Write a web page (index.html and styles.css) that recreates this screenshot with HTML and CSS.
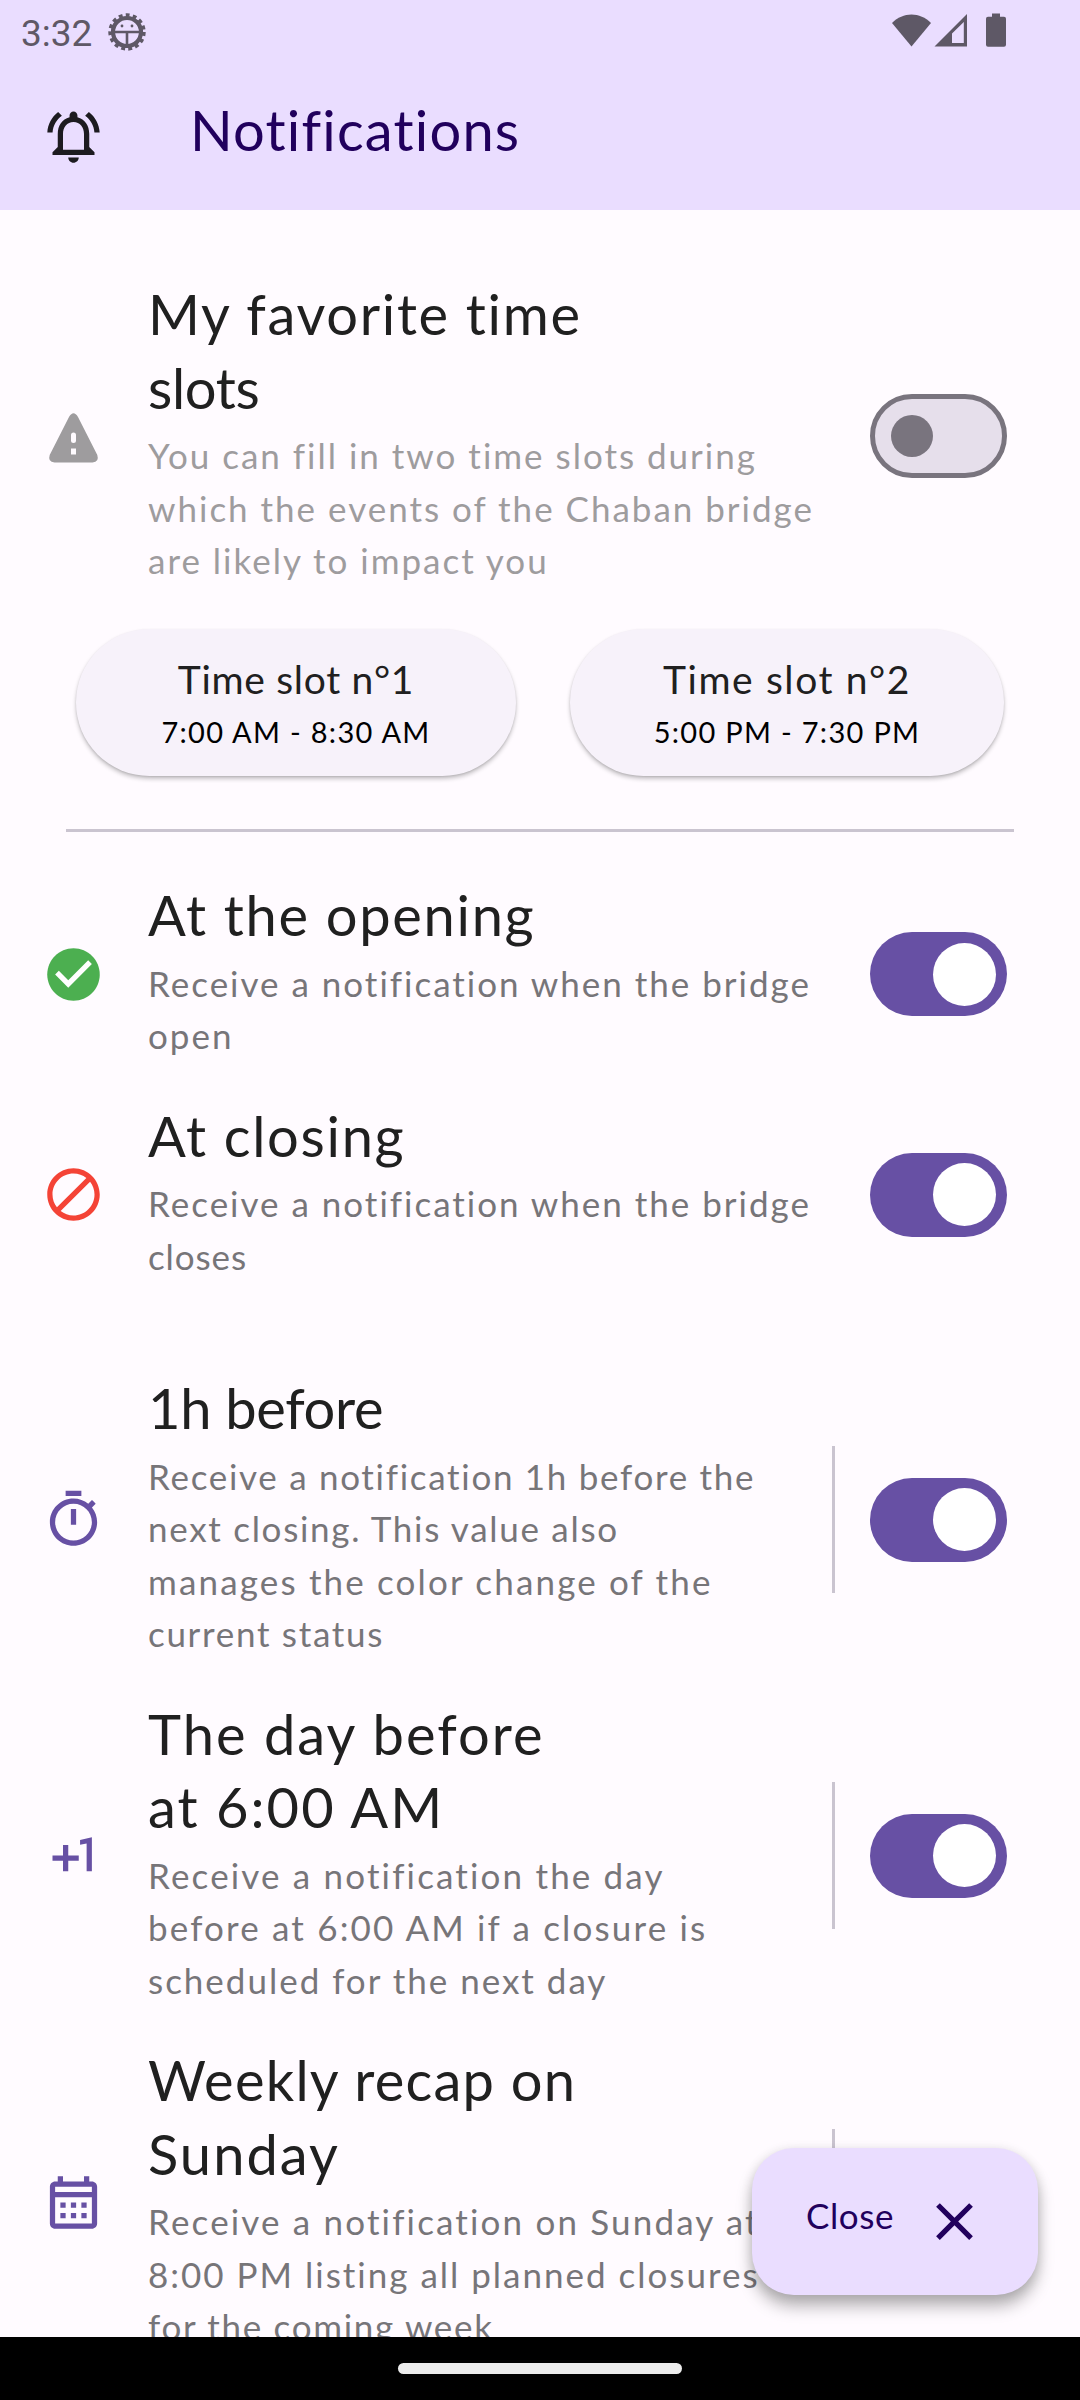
FILE: index.html
```html
<!DOCTYPE html>
<html lang="en">
<head>
<meta charset="utf-8">
<title>Notifications</title>
<link rel="stylesheet" href="styles.css">
</head>
<body>
<div class="screen">
  <header class="header">
    <div class="status">
      <span class="clock">3:32</span>
      <svg class="debug" viewBox="0 0 38 38" fill="none">
        <circle cx="19" cy="19" r="17" stroke="#5e5866" stroke-width="3.4" stroke-dasharray="3.9 3.220"/>
        <circle cx="19" cy="19" r="14" stroke="#5e5866" stroke-width="4.2"/>
        <path d="M5 19h28M19 19v14" stroke="#5e5866" stroke-width="2.6"/>
        <circle cx="14" cy="13" r="1.4" fill="#5e5866"/><circle cx="24" cy="13" r="1.4" fill="#5e5866"/>
      </svg>
      <svg class="signals" viewBox="0 0 116 36" fill="#5e5866">
        <path d="M0 10C11-1.500 28-1.500 39 10L19.500 33.500z"/>
        <path fill-rule="evenodd" d="M42.500 33.500 75 1v32.500zM60 30h11.800V9L60 20.500z"/>
        <path d="M100 .5h8v3.300h4a2 2 0 0 1 2 2v26a2 2 0 0 1-2 2H96a2 2 0 0 1-2-2v-26a2 2 0 0 1 2-2h4z"/>
      </svg>
    </div>
    <div class="appbar">
      <svg class="icon bell" viewBox="0 0 24 24"><path d="M12 22c1.100 0 2-.9 2-2h-4c0 1.100.9 2 2 2zm6-6v-5c0-3.070-1.630-5.640-4.500-6.320V4c0-.83-.67-1.500-1.500-1.500s-1.500.67-1.500 1.500v.68C7.640 5.360 6 7.920 6 11v5l-2 2v1h16v-1l-2-2zm-2 1H8v-6c0-2.480 1.510-4.500 4-4.500s4 2.020 4 4.500v6zM7.580 4.080L6.150 2.650C3.750 4.480 2.170 7.300 2.030 10.500h2c.15-2.650 1.510-4.970 3.550-6.420zm12.390 6.420h2c-.15-3.200-1.730-6.020-4.120-7.850l-1.420 1.430c2.020 1.450 3.390 3.770 3.540 6.420z"/></svg>
      <h1>Notifications</h1>
    </div>
  </header>

  <main class="content">
    <section class="row muted">
      <svg class="icon warning" viewBox="0 0 63 63"><path fill-rule="evenodd" d="M27 12Q31.500 4.500 36 12L55.300 50Q57.500 57 50.500 57.500H12.500Q5.500 57 7.700 50zM31.500 27.500a2.500 2.500 0 0 0-2.500 2.500v5.500a2.500 2.500 0 0 0 5 0V30a2.500 2.500 0 0 0-2.500-2.500zM29 43.500v6h5v-6z"/></svg>
      <div class="body">
        <h2>My favorite time<br><span class="snug">slots</span></h2>
        <p>You can fill in two time slots during<br>which the events of the Chaban bridge<br>are likely to impact you</p>
      </div>
      <span class="switch off"><i></i></span>
    </section>

    <div class="slots">
      <div class="slot first"><b>Time slot n°1</b><span>7:00 AM - 8:30 AM</span></div>
      <div class="slot second"><b>Time slot n°2</b><span>5:00 PM - 7:30 PM</span></div>
    </div>
    <hr>

    <section class="row">
      <svg class="icon green" viewBox="0 0 24 24"><path d="M12 2C6.480 2 2 6.480 2 12s4.480 10 10 10 10-4.480 10-10S17.520 2 12 2z"/><path fill="#fff" d="M10 17l-5-5 1.410-1.410L10 14.170l7.590-7.590L19 8l-9 9z"/></svg>
      <div class="body">
        <h2>At the opening</h2>
        <p>Receive a notification when the bridge<br>open</p>
      </div>
      <span class="switch"><i></i></span>
    </section>

    <section class="row closing">
      <svg class="icon red" viewBox="0 0 24 24"><path d="M12 2C6.480 2 2 6.480 2 12s4.480 10 10 10 10-4.480 10-10S17.520 2 12 2zM4 12c0-4.420 3.580-8 8-8 1.850 0 3.550.63 4.900 1.690L5.690 16.900C4.630 15.550 4 13.850 4 12zm8 8c-1.850 0-3.550-.63-4.900-1.690L18.310 7.100C19.370 8.450 20 10.150 20 12c0 4.420-3.580 8-8 8z"/></svg>
      <div class="body">
        <h2>At closing</h2>
        <p>Receive a notification when the bridge<br><span class="tight">closes</span></p>
      </div>
      <span class="switch"><i></i></span>
    </section>

    <section class="row">
      <svg class="icon" viewBox="0 0 24 24"><path d="M9 1h6v2H9zM19.030 7.390l1.420-1.420c-.43-.51-.9-.99-1.410-1.410l-1.420 1.420C16.070 4.740 14.120 4 12 4c-4.970 0-9 4.030-9 9s4.020 9 9 9 9-4.030 9-9c0-2.120-.74-4.070-1.970-5.610zM12 20c-3.870 0-7-3.130-7-7s3.130-7 7-7 7 3.130 7 7-3.130 7-7 7zM11 8h2v6h-2z"/></svg>
      <div class="body">
        <h2 class="snug">1h before</h2>
        <p><span class="medium">Receive a notification 1h before the</span><br><span class="medium">next closing. This value also</span><br><span class="wide">manages the color change of the</span><br><span class="medium">current status</span></p>
      </div>
      <span class="rule"></span>
      <span class="switch"><i></i></span>
    </section>

    <section class="row">
      <svg class="icon" viewBox="0 0 24 24"><path d="M10 8H8v4H4v2h4v4h2v-4h4v-2h-4zm4.500-1.920V7.900l2.500-.5V18h2V5z"/></svg>
      <div class="body">
        <h2><span class="loose">The day before</span><br><span class="loose">at 6:00 AM</span></h2>
        <p><span class="wide">Receive a notification the day</span><br><span class="wide">before at 6:00 AM if a closure is</span><br>scheduled for the next day</p>
      </div>
      <span class="rule"></span>
      <span class="switch"><i></i></span>
    </section>

    <section class="row">
      <svg class="icon" viewBox="0 0 24 24"><path d="M19 4h-1V2h-2v2H8V2H6v2H5c-1.110 0-1.990.9-1.990 2L3 20c0 1.100.89 2 2 2h14c1.100 0 2-.9 2-2V6c0-1.100-.9-2-2-2zm0 16H5V10h14v10zm0-12H5V6h14v2zM9 14H7v-2h2v2zm4 0h-2v-2h2v2zm4 0h-2v-2h2v2zm-8 4H7v-2h2v2zm4 0h-2v-2h2v2zm4 0h-2v-2h2v2z"/></svg>
      <div class="body">
        <h2><span class="near">Weekly recap on</span><br><span class="loose">Sunday</span></h2>
        <p><span class="wide">Receive a notification on Sunday at</span><br>8:00 PM listing all planned closures<br><span class="medium">for the coming week</span></p>
      </div>
      <span class="rule"></span>
      <span class="switch"><i></i></span>
    </section>
  </main>

  <div class="fab">
    <span>Close</span>
    <svg class="fab-icon" viewBox="0 0 24 24"><path d="M19 6.410L17.590 5 12 10.590 6.410 5 5 6.410 10.590 12 5 17.590 6.410 19 12 13.410 17.590 19 19 17.590 13.410 12z"/></svg>
  </div>
  <nav class="navbar"><span></span></nav>
</div>
</body>
</html>
```
FILE: styles.css
```css
* { box-sizing: border-box; }

body {
  margin: 0;
  background: #fffbff;
  font-family: Lato, "Open Sans", sans-serif;
  font-kerning: normal;
}

.screen {
  position: relative;
  display: flex;
  flex-direction: column;
  width: 1080px;
  height: 2400px;
  overflow: hidden;
}

/* Header */
.header {
  flex: none;
  height: 210px;
  background: #eaddff;
}

.status {
  display: flex;
  align-items: center;
  height: 63px;
  padding: 0 72px 0 21px;
}

.clock {
  width: 87px;
  font: 37px/40px Roboto, sans-serif;
  color: #5e5866;
  margin-top: 4px;
}

.debug { width: 38px; height: 38px; }

.signals {
  width: 116px;
  height: 36px;
  margin: 0 0 1px auto;
}

.appbar {
  display: flex;
  align-items: center;
  gap: 85px;
  height: 147px;
  padding-left: 42px;
}

h1, h2, p { margin: 0; font-weight: 400; }

h1 {
  margin-bottom: 13px;
  font-size: 56px;
  line-height: 74px;
  letter-spacing: 1.2px;
  font-variant-ligatures: none;
  color: #21005d;
}

/* Settings list */
.content {
  flex: none;
  height: 2127px;
  padding-top: 67px;
  overflow: hidden;
}

.row {
  display: flex;
  align-items: center;
  padding: 0 73px 0 42px;
  margin-bottom: 28px;
}

.closing { margin-bottom: 80px; }

.icon {
  flex: none;
  width: 63px;
  height: 63px;
  fill: #6750a4;
}

.header .icon { fill: #1d1b20; }
.icon.warning { fill: #9e9c9e; }
.icon.green { fill: #4caf50; }
.icon.red { fill: #f44336; }

.body {
  margin-left: 43px;
  padding-bottom: 9px;
  white-space: nowrap;
}

h2 {
  margin-bottom: 5px;
  font-size: 56px;
  line-height: 73.5px;
  letter-spacing: 1.7px;
  color: #202020;
}

p {
  font-size: 35px;
  line-height: 52.5px;
  letter-spacing: 1.99px;
  color: #777579;
}

.muted p { color: #9e9c9e; }

/* Tracking steps */
.snug { letter-spacing: -.3px; }
.near { letter-spacing: 1.25px; }
.loose { letter-spacing: 2.05px; }
.tight { letter-spacing: .9px; }
.medium { letter-spacing: 1.7px; }
.wide { letter-spacing: 2.16px; }

.switch {
  flex: none;
  display: flex;
  align-items: center;
  justify-content: flex-end;
  width: 137px;
  height: 84px;
  margin-left: auto;
  padding: 0 11px;
  border-radius: 42px;
  background: #6750a4;
}

.switch i {
  width: 63px;
  height: 63px;
  border-radius: 50%;
  background: #fff;
}

.switch.off {
  justify-content: flex-start;
  padding: 0 16px;
  border: 5px solid #79747e;
  background: #e6dfeb;
}

.switch.off i {
  width: 42px;
  height: 42px;
  background: #79747e;
}

.rule {
  width: 3px;
  height: 147px;
  margin-left: auto;
  background: #cac4d0;
}

.rule + .switch { margin-left: 35px; }

.slots {
  display: flex;
  justify-content: space-between;
  padding: 0 76px;
  margin-top: 33.5px;
}

.slot {
  display: flex;
  flex-direction: column;
  align-items: center;
  width: 440px;
  height: 147px;
  padding-top: 25px;
  border-radius: 74px;
  background: #f7f2fa;
  box-shadow: 0 3px 4px rgba(0, 0, 0, .22), 0 1px 2px rgba(0, 0, 0, .1);
}

.slot.second { width: 434px; }

.slot b {
  font-size: 39px;
  font-weight: 400;
  line-height: 50px;
  letter-spacing: .7px;
  color: #202020;
}

.slot.second b { letter-spacing: 1.6px; }

.slot span {
  margin-top: 6px;
  font-size: 29px;
  line-height: 44px;
  letter-spacing: 1.3px;
  color: #000;
}

hr {
  height: 3px;
  margin: 53px 66px 46px;
  border: 0;
  background: #cac4d0;
}

/* Floating button */
.fab {
  position: absolute;
  right: 42px;
  bottom: 105px;
  display: flex;
  align-items: center;
  justify-content: space-between;
  width: 286px;
  height: 147px;
  padding: 0 52px 0 54px;
  border-radius: 42px;
  background: #eaddff;
  box-shadow: 0 12px 16px rgba(0, 0, 0, .27), 0 2px 12px rgba(0, 0, 0, .12);
  color: #21005d;
  font-size: 35px;
  letter-spacing: .6px;
}

.fab span { margin-bottom: 14px; }

.fab-icon {
  width: 63px;
  height: 63px;
  fill: #21005d;
}

.navbar {
  position: relative;
  display: flex;
  justify-content: center;
  flex: none;
  height: 63px;
  padding-top: 26px;
  background: #000;
}

.navbar span {
  width: 284px;
  height: 11px;
  border-radius: 6px;
  background: #ececec;
}
```
